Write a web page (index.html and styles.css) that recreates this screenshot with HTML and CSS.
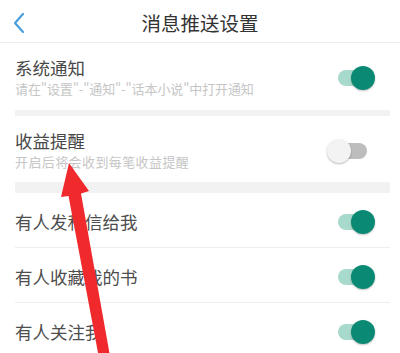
FILE: index.html
```html
<!DOCTYPE html>
<html lang="zh-CN">
<head>
<meta charset="utf-8">
<title>消息推送设置</title>
<link rel="stylesheet" href="styles.css">
</head>
<body>
<div class="page">
  <header class="topbar">
    <svg class="back" width="14" height="22" viewBox="0 0 14 22"><path d="M11 2 L3 11 L11 20" fill="none" stroke="#4a9edb" stroke-width="2.2" stroke-linecap="round" stroke-linejoin="round"/></svg>
    <h1 class="title">消息推送设置</h1>
  </header>
  <div class="list">
    <div class="item item-first">
      <div class="texts">
        <div class="name">系统通知</div>
        <div class="desc desc-tight">请在"设置"-"通知"-"话本小说"中打开通知</div>
      </div>
      <span class="switch on"><span class="track"></span><span class="knob"></span></span>
    </div>
    <div class="band band-thin"></div>
    <div class="item item-second">
      <div class="texts">
        <div class="name">收益提醒</div>
        <div class="desc">开启后将会收到每笔收益提醒</div>
      </div>
      <span class="switch off"><span class="knob"></span><span class="track"></span></span>
    </div>
    <div class="band band-thick"></div>
    <div class="row">
      <span class="row-name">有人发私信给我</span>
      <span class="switch on"><span class="track"></span><span class="knob"></span></span>
    </div>
    <div class="row">
      <span class="row-name">有人收藏我的书</span>
      <span class="switch on"><span class="track"></span><span class="knob"></span></span>
    </div>
    <div class="row">
      <span class="row-name">有人关注我</span>
      <span class="switch on"><span class="track"></span><span class="knob"></span></span>
    </div>
  </div>
  <svg class="arrow" width="400" height="353" viewBox="0 0 400 353">
    <polygon points="69,163 89,191 81,193.5 110,356 99,358 68.5,196 61,197" fill="#f02a2c"/>
  </svg>
</div>
</body>
</html>
```

FILE: styles.css
```css
html, body {
  margin: 0;
  padding: 0;
  background: #ffffff;
}
body {
  width: 400px;
  height: 353px;
  overflow: hidden;
  font-family: "Noto Sans CJK SC", "Noto Sans", sans-serif;
}
.page {
  position: relative;
  width: 400px;
  height: 353px;
  overflow: hidden;
}
.topbar {
  height: 42px;
  border-bottom: 1px solid #ececec;
  display: flex;
  align-items: center;
  justify-content: center;
  position: relative;
}
.back {
  position: absolute;
  left: 12px;
  top: 12px;
}
.title {
  margin: 0;
  padding-top: 3px;
  font-size: 19.5px;
  font-weight: 400;
  color: #333333;
  line-height: 24px;
}
.list {
  margin: 0 10px 0 15px;
}
.item {
  display: flex;
  align-items: center;
  justify-content: space-between;
}
.item-first {
  padding: 15px 15px 13px 0;
}
.item-second {
  padding: 15px 15px 12px 0;
}
.name {
  font-size: 17.5px;
  line-height: 20px;
  color: #484848;
}
.desc {
  margin-top: 3px;
  font-size: 13px;
  line-height: 16px;
  color: #c6c6c6;
  letter-spacing: 0.4px;
}
.desc-tight {
  letter-spacing: -0.1px;
}
.band {
  background: #f2f2f2;
}
.band-thin {
  height: 6px;
}
.band-thick {
  height: 11px;
}
.row {
  padding: 3px 15px 0 0;
  display: flex;
  align-items: center;
  justify-content: space-between;
  border-bottom: 1px solid #eeeeee;
  height: 51px;
}
.row-name {
  font-size: 17.5px;
  line-height: 20px;
  color: #4d4d4d;
}
.switch {
  width: 48px;
  height: 25px;
  display: flex;
  align-items: center;
  flex-shrink: 0;
}
.switch.on {
  justify-content: flex-end;
}
.switch.off {
  justify-content: flex-start;
}
.track {
  height: 16px;
  border-radius: 8px;
}
.knob {
  width: 24px;
  height: 24px;
  border-radius: 50%;
  position: relative;
  z-index: 1;
}
.on .track {
  width: 32px;
  background: #a8d9cd;
}
.on .knob {
  margin-left: -19px;
  background: #0a8a74;
  box-shadow: 0 1px 2px rgba(0, 0, 0, 0.25);
}
.off .knob {
  background: #f3f3f3;
  box-shadow: 0 1px 2px rgba(0, 0, 0, 0.28);
}
.off .track {
  width: 26px;
  margin-left: -10px;
  background: #bdbdbd;
}
.arrow {
  position: absolute;
  left: 0;
  top: 0;
  pointer-events: none;
}
```
